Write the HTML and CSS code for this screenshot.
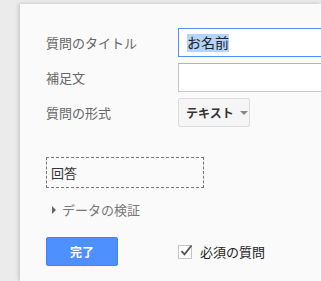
FILE: index.html
```html
<!DOCTYPE html>
<html lang="ja">
<head>
    <meta charset="UTF-8">
    <title>質問の編集</title>
    <link rel="stylesheet" href="styles.css">
</head>
<body>

<div class="panel">
    <div class="row">
        <span class="label">質問のタイトル</span>
        <div class="field focused"><span class="selected">お名前</span></div>
    </div>
    <div class="row">
        <span class="label">補足文</span>
        <div class="field"></div>
    </div>
    <div class="row">
        <span class="label">質問の形式</span>
        <span class="select">テキスト<span class="arrow"></span></span>
    </div>

    <div class="answer">回答</div>

    <div class="validation"><span class="tri"></span>データの検証</div>

    <div class="footer">
        <span class="btnDone">完了</span>
        <label class="required">
            <span class="check">
                <svg width="14" height="14" viewBox="0 0 14 14">
                    <path d="M2.5 7.2 L5.5 10.3 L12.5 1.5" fill="none" stroke="#555" stroke-width="1.8"/>
                </svg>
            </span>
            必須の質問
        </label>
    </div>
</div>

</body>
</html>
```

FILE: styles.css
```css
body {
    margin: 0;
    background-color: #ebebeb;
    font-family: Arial, "Noto Sans CJK JP", sans-serif;
    font-size: 13px;
    overflow: hidden;
}
.panel {
    margin: 4px 0 0 20px;
    height: calc(100vh - 4px);
    background-color: #fafafa;
    box-shadow: -1px 0 4px rgba(0, 0, 0, 0.2);
    padding: 24px 0 0 26px;
    box-sizing: border-box;
    overflow: hidden;
}
.row {
    display: flex;
    align-items: center;
    margin-bottom: 6px;
}
.label {
    flex: none;
    width: 132px;
    color: #666;
}
.field {
    flex: none;
    width: 200px;
    height: 27px;
    border: 1px solid #c6c6c6;
    border-top-color: #b5b5b5;
    background-color: #fff;
    display: flex;
    align-items: center;
    padding-left: 8px;
    font-size: 14px;
    color: #222;
}
.field.focused {
    border: 1px solid #4d90fe;
}
.selected {
    background-color: #b3d4fd;
    line-height: 18px;
}
.select {
    flex: none;
    box-sizing: border-box;
    width: 72px;
    display: inline-flex;
    align-items: center;
    height: 29px;
    padding: 0 0 0 7px;
    background-color: #f5f5f5;
    border: 1px solid #dcdcdc;
    border-radius: 2px;
    font-weight: bold;
    color: #333;
    font-size: 12px;
}
.arrow {
    display: inline-block;
    margin-left: 6px;
    border-left: 4px solid transparent;
    border-right: 4px solid transparent;
    border-top: 4px solid #888;
}
.answer {
    box-sizing: border-box;
    width: 158px;
    height: 31px;
    margin-top: 30px;
    border: 1px dashed #777;
    display: flex;
    align-items: center;
    padding-left: 4px;
    color: #333;
    font-size: 13px;
}
.validation {
    margin-top: 12px;
    margin-left: 6px;
    display: flex;
    align-items: center;
    color: #777;
}
.tri {
    display: inline-block;
    border-top: 4px solid transparent;
    border-bottom: 4px solid transparent;
    border-left: 4px solid #666;
    margin-right: 6px;
}
.footer {
    margin-top: 18px;
    display: flex;
    align-items: center;
}
.btnDone {
    display: inline-flex;
    align-items: center;
    justify-content: center;
    width: 70px;
    height: 27px;
    background-color: #4d90fe;
    border: 1px solid #3f85f5;
    border-radius: 2px;
    color: #fff;
    font-weight: bold;
    font-size: 12px;
}
.required {
    display: flex;
    align-items: center;
    margin-left: 60px;
    color: #222;
    font-size: 13px;
}
.check {
    position: relative;
    width: 12px;
    height: 12px;
    border: 1px solid #c6c6c6;
    background-color: #fff;
    margin-right: 8px;
}
.check svg {
    position: absolute;
    left: 0;
    top: -2px;
}
```
